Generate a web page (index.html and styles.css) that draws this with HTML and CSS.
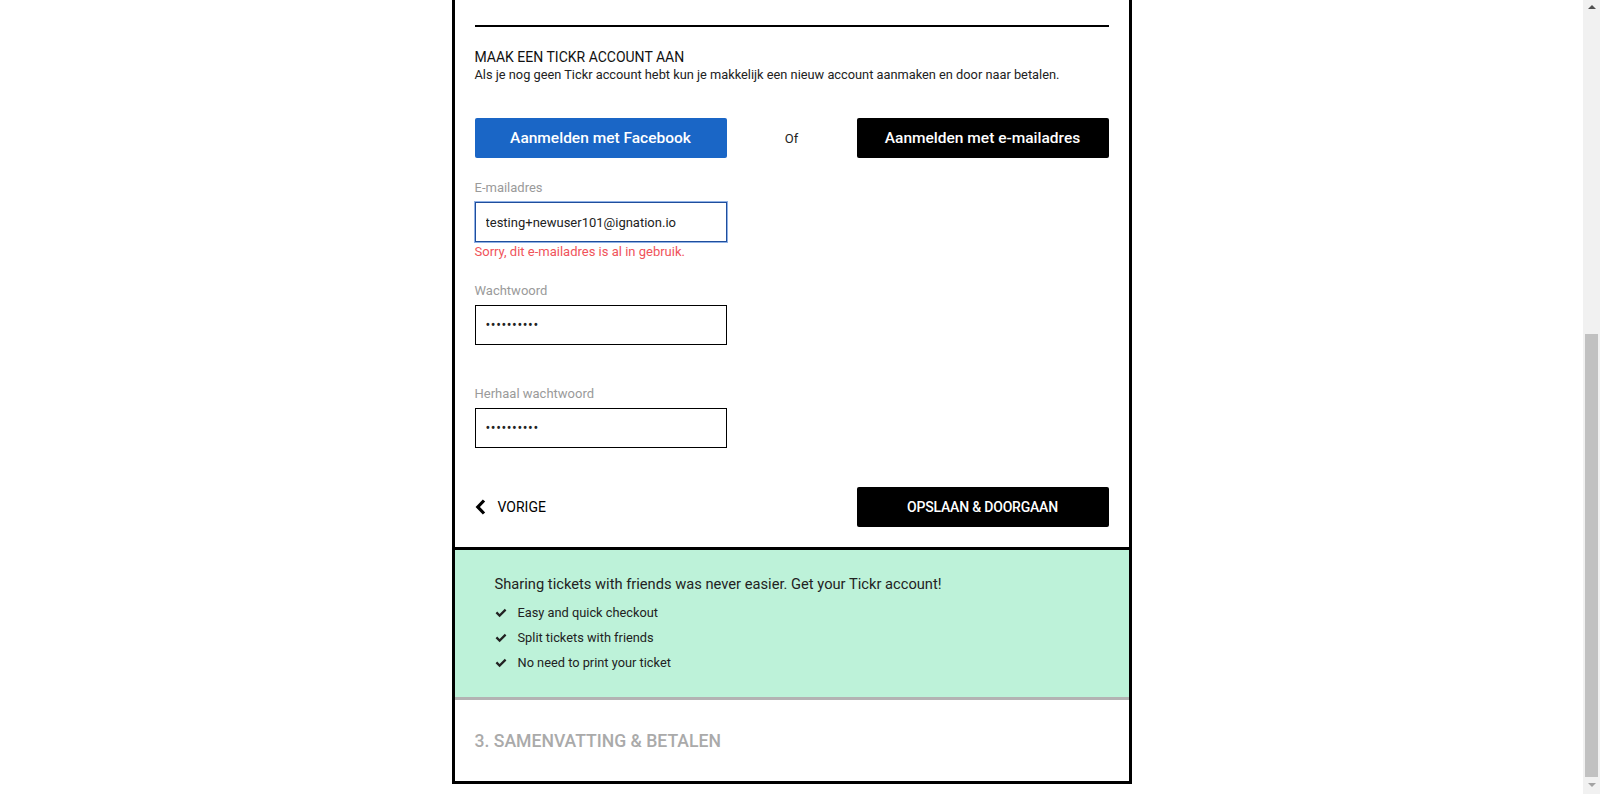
FILE: index.html
```html
<!DOCTYPE html>
<html lang="nl">
<head>
<meta charset="utf-8">
<title>Tickr - Account aanmaken</title>
<link rel="stylesheet" href="styles.css">
</head>
<body>
<div class="screen">
  <main class="page">
    <div class="card">
      <section class="account">
        <div class="divider"></div>
        <h2 class="heading">MAAK EEN TICKR ACCOUNT AAN</h2>
        <p class="sub">Als je nog geen Tickr account hebt kun je makkelijk een nieuw account aanmaken en door naar betalen.</p>
        <div class="social">
          <button class="btn btn-fb" type="button">Aanmelden met Facebook</button>
          <span class="or">Of</span>
          <button class="btn btn-dark" type="button">Aanmelden met e-mailadres</button>
        </div>
        <div class="field">
          <label class="label" for="email">E-mailadres</label>
          <input class="input input-focus" id="email" type="text" value="testing+newuser101@ignation.io">
          <div class="error">Sorry, dit e-mailadres is al in gebruik.</div>
        </div>
        <div class="field">
          <label class="label" for="pw">Wachtwoord</label>
          <input class="input" id="pw" type="password" value="abcdefghij">
          <div class="error"></div>
        </div>
        <div class="field">
          <label class="label" for="pw2">Herhaal wachtwoord</label>
          <input class="input" id="pw2" type="password" value="abcdefghij">
          <div class="error"></div>
        </div>
        <div class="actions">
          <a class="back" href="#">
            <svg class="chev" width="11" height="16" viewBox="0 0 11 16"><polyline points="9,1.5 2.8,8 9,14.5" fill="none" stroke="#000" stroke-width="3.2"/></svg>
            <span>VORIGE</span>
          </a>
          <button class="btn btn-dark btn-caps" type="button">OPSLAAN &amp; DOORGAAN</button>
        </div>
      </section>
      <section class="promo">
        <p class="promo-title">Sharing tickets with friends was never easier. Get your Tickr account!</p>
        <ul class="checks">
          <li><svg class="check" width="12" height="10" viewBox="0 0 12 10"><path d="M0.6 5.2 L2.2 3.6 L4.6 6 L9.8 0.8 L11.4 2.4 L4.6 9.2 Z" fill="#222"/></svg>Easy and quick checkout</li>
          <li><svg class="check" width="12" height="10" viewBox="0 0 12 10"><path d="M0.6 5.2 L2.2 3.6 L4.6 6 L9.8 0.8 L11.4 2.4 L4.6 9.2 Z" fill="#222"/></svg>Split tickets with friends</li>
          <li><svg class="check" width="12" height="10" viewBox="0 0 12 10"><path d="M0.6 5.2 L2.2 3.6 L4.6 6 L9.8 0.8 L11.4 2.4 L4.6 9.2 Z" fill="#222"/></svg>No need to print your ticket</li>
        </ul>
      </section>
      <section class="step">
        <h3 class="step-title">3. SAMENVATTING &amp; BETALEN</h3>
      </section>
    </div>
  </main>
  <div class="scrollbar">
    <div class="arrow arrow-up"></div>
    <div class="track"><div class="thumb"></div></div>
    <div class="arrow arrow-down"></div>
  </div>
</div>
</body>
</html>
```
FILE: styles.css
```css
* { box-sizing: border-box; }
html, body {
  margin: 0;
  padding: 0;
  height: 100%;
  overflow: hidden;
  background: #fff;
  font-family: Roboto, "Liberation Sans", Arial, sans-serif;
  color: #222;
}
.screen {
  display: flex;
  height: 794px;
}
.page {
  flex: 1;
  display: flex;
  justify-content: center;
  align-items: flex-start;
}
.card {
  width: 680px;
  border: 3px solid #000;
  border-top: none;
  background: #fff;
}
.account {
  padding: 25px 20px 20px;
}
.divider {
  border-top: 2px solid #000;
}
.heading {
  margin: 20px 0 0;
  font-size: 14px;
  font-weight: 400;
  line-height: 20px;
  color: #111;
}
.sub {
  margin: 0;
  font-size: 12.8px;
  line-height: 16px;
  color: #222;
}
.social {
  margin-top: 35px;
  display: grid;
  grid-template-columns: 252px 1fr 252px;
  align-items: center;
}
.btn {
  height: 40px;
  border: none;
  border-radius: 2px;
  font-family: Roboto, "Liberation Sans", Arial, sans-serif;
  font-size: 15.5px;
  font-weight: 500;
  color: #fff;
  cursor: pointer;
}
.btn-fb { background: #1a66c6; }
.btn-dark { background: #000; }
.btn-caps { width: 252px; font-size: 14px; letter-spacing: -0.2px; }
.or {
  text-align: center;
  font-size: 13px;
  color: #222;
}
.field {
  display: flex;
  flex-direction: column;
  width: 252px;
}
.social + .field { margin-top: 22px; }
.field + .field { margin-top: 23px; }
.label {
  font-size: 13px;
  line-height: 16px;
  color: #9a9a9a;
  margin-bottom: 6px;
}
.input {
  height: 40px;
  width: 252px;
  border: 1px solid #000;
  border-radius: 0;
  padding: 0 10px;
  font-family: Roboto, "Liberation Sans", Arial, sans-serif;
  font-size: 13px;
  color: #222;
  background: #fff;
  outline: none;
}
.input[type="password"] { font-size: 14px; letter-spacing: 0.6px; }
.input-focus {
  border-color: #1f4e9c;
  box-shadow: 0 0 0 1px #8fb1e6;
}
.error {
  margin-top: 2px;
  height: 16px;
  font-size: 13px;
  line-height: 16px;
  color: #f0535a;
}
.actions {
  margin-top: 21px;
  display: flex;
  justify-content: space-between;
  align-items: center;
}
.back {
  display: flex;
  align-items: center;
  gap: 12px;
  color: #000;
  text-decoration: none;
  font-size: 14px;
}
.promo {
  border-top: 3px solid #000;
  background: #bdf2d9;
  padding: 24px 40px 22px;
}
.promo-title {
  margin: 0;
  font-size: 14.7px;
  line-height: 20px;
  color: #222;
}
.checks {
  list-style: none;
  margin: 6px 0 0;
  padding: 0;
}
.checks li {
  display: flex;
  align-items: center;
  gap: 11px;
  font-size: 12.8px;
  line-height: 25px;
  color: #222;
}
.step {
  border-top: 3px solid #b3b3b3;
  padding: 29px 20px 28px;
}
.step-title {
  margin: 0;
  font-size: 17.6px;
  font-weight: 500;
  line-height: 24px;
  color: #aaa;
}
.scrollbar {
  width: 17px;
  background: #f1f1f1;
  display: flex;
  flex-direction: column;
}
.arrow {
  height: 17px;
  display: flex;
  justify-content: center;
}
.arrow-up::before {
  content: "";
  margin-top: 5px;
  border-left: 4px solid transparent;
  border-right: 4px solid transparent;
  border-bottom: 4px solid #505050;
  height: 0;
}
.arrow-down::before {
  content: "";
  margin-top: 6px;
  border-left: 4px solid transparent;
  border-right: 4px solid transparent;
  border-top: 4px solid #a3a3a3;
  height: 0;
}
.track {
  flex: 1;
  display: flex;
  flex-direction: column;
  justify-content: flex-end;
  padding: 0 2px 0 2px;
}
.thumb {
  height: 443px;
  background: #c1c1c1;
}
```
